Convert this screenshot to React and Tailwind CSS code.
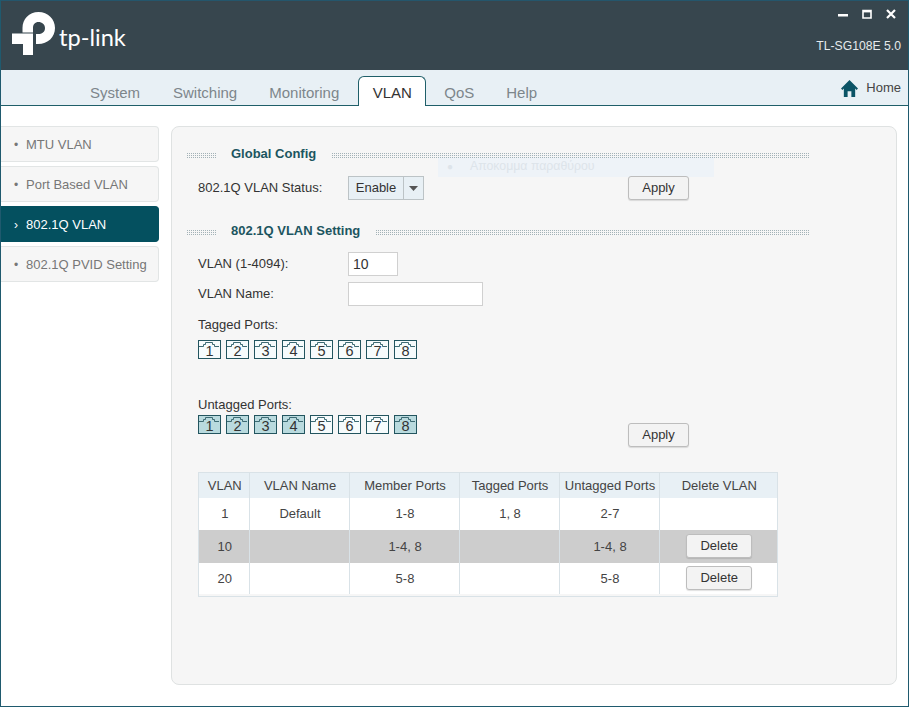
const font = { fontFamily: '"Liberation Sans", Arial, sans-serif' };

function Logo() {
  return (
    <svg width="60" height="46" viewBox="12 11 60 46" className="shrink-0">
      <path fill="#fff" d="M22.5 32.5V28C22.5 19 29 12 38.5 12C48 12 55 19 55 28C55 37 48 44 38 44H36V34H38C42 34 45 32 45 28C45 24.5 42 22 38.5 22C35 22 33 24.5 33 28V32.5Z" />
      <path fill="#fff" d="M12 33.5H33V55H23V44H12Z" />
    </svg>
  );
}

function Dots({ className }) {
  return <div className={"h-[6px] mt-[3px] bg-[linear-gradient(#f6f6f6_1px,transparent_1px),linear-gradient(90deg,#a3b2b7_1px,transparent_1px)] bg-[length:2px_2px] " + className} />;
}

function SectionTitle({ title, className }) {
  return (
    <div className={"flex items-center h-[20px] " + className}>
      <Dots className="w-[29px] ml-[15px]" />
      <span className="ml-[15px] pt-[1px] text-[13px] font-bold text-[#1c5560] whitespace-pre">{title}</span>
      <Dots className="flex-1 ml-[16px] mr-[86px]" />
    </div>
  );
}

function Btn({ children, className = "" }) {
  return (
    <button className={"h-[24px] rounded-[3px] border border-[#bdbdbd] bg-[#f3f3f3] text-[13px] text-[#333] shadow-[0_1px_1px_rgba(0,0,0,0.12)] " + className}>
      {children}
    </button>
  );
}

function Port({ n, on }) {
  return (
    <div className={"relative w-[23px] h-[19px] border-[1.5px] border-[#23555f] flex items-end justify-center " + (on ? "bg-[#b9dade]" : "bg-[#f6fbfc]")}>
      <svg width="20" height="7" viewBox="0 0 20 7" className="absolute left-0 top-0">
        <path d="M0 5.5H4.5V3.5H6.5V1.5H13.5V3.5H15.5V5.5H20" fill="none" stroke="#3d6a73" strokeWidth="1" />
      </svg>
      <span className="relative text-[14.5px] leading-[14px] text-[#333]">{n}</span>
    </div>
  );
}

function Ports({ on = [] }) {
  return (
    <div className="flex gap-[5px]">
      {[1, 2, 3, 4, 5, 6, 7, 8].map((n) => (
        <Port key={n} n={n} on={on.includes(n)} />
      ))}
    </div>
  );
}

function Side({ label, active }) {
  return (
    <div
      className={
        "h-[36px] flex items-center rounded-r-[4px] border-y border-r text-[13px] pt-[1px] " +
        (active ? "bg-[#04505f] border-[#04505f] text-white" : "bg-[#f6f6f6] border-[#e2e5e5] text-[#777]")
      }
    >
      <span className={"w-[25px] pl-[13px] text-[12px] " + (active ? "text-white" : "text-[#777]")}>{active ? "›" : "•"}</span>
      <span>{label}</span>
    </div>
  );
}

const rows = [
  ["1", "Default", "1-8", "1, 8", "2-7", false, "bg-white", "h-[32px]"],
  ["10", "", "1-4, 8", "", "1-4, 8", true, "bg-[#cdcdcd]", "h-[33px]"],
  ["20", "", "5-8", "", "5-8", true, "bg-white", "h-[31px]"],
];

export default function App() {
  return (
    <div style={font} className="w-[909px] h-[707px] flex flex-col overflow-hidden bg-white border-x border-[#1f5a6e] border-b text-[#333]">
      <header className="h-[70px] shrink-0 bg-[#37464e] border-t border-[#24566c] flex items-start justify-between">
        <div className="flex items-start pl-[11px] pt-[10px]">
          <Logo />
          <span style={{ fontFamily: "Lato, sans-serif" }} className="-ml-[13px] mt-[8px] text-[23.6px] leading-[36px] text-white whitespace-nowrap">tp-link</span>
        </div>
        <div className="flex flex-col items-end pr-[7px] pt-[7px]">
          <div className="flex items-center gap-[14px] h-[12px] pr-[5px]">
            <svg width="10" height="10" viewBox="0 0 10 10"><rect x="0" y="5" width="10" height="2.5" fill="#fff" /></svg>
            <svg width="10" height="10" viewBox="0 0 10 10"><path d="M1 1.5H9V9H1Z" fill="none" stroke="#fff" strokeWidth="1.6" /><rect x="1" y="1" width="8" height="2.4" fill="#fff" /></svg>
            <svg width="10" height="10" viewBox="0 0 10 10"><path d="M1 1L9 9M9 1L1 9" stroke="#fff" strokeWidth="2.2" /></svg>
          </div>
          <div className="mt-[18px] text-[12.2px] leading-[16px] text-[#e6eaec] whitespace-nowrap">TL-SG108E 5.0</div>
        </div>
      </header>

      <nav className="h-[36px] shrink-0 bg-[#e8f0f5] border-b border-[#1f5f69] flex items-end pl-[89px] pr-[7px] text-[15px] text-[#7d868b]">
        <span className="pb-[2px] leading-[20px]">System</span>
        <span className="ml-[33px] pb-[2px] leading-[20px]">Switching</span>
        <span className="ml-[32px] pb-[2px] leading-[20px]">Monitoring</span>
        <span className="ml-[19px] -mb-px h-[30px] w-[68px] flex items-center justify-center pt-[3px] bg-white border-x border-t border-[#1f5f69] rounded-t-[6px] text-[#333]">VLAN</span>
        <span className="ml-[18px] pb-[2px] leading-[20px]">QoS</span>
        <span className="ml-[32px] pb-[2px] leading-[20px]">Help</span>
        <div className="ml-auto self-start mt-[9px] flex items-center gap-[8px] text-[13px] leading-[18px] text-[#444]">
          <svg width="17" height="19" viewBox="0 0 18 19">
            <path d="M9 0.5L0 9.5L1.5 11L3 9.6V18.5H7V12.5H11V18.5H15V9.6L16.5 11L18 9.5Z" fill="#0b5466" />
          </svg>
          <span className="-mt-[2px]">Home</span>
        </div>
      </nav>

      <main className="flex-1 flex items-start pt-[20px]">
        <aside className="w-[158px] shrink-0 flex flex-col gap-[4px]">
          <Side label="MTU VLAN" />
          <Side label="Port Based VLAN" />
          <Side label="802.1Q VLAN" active />
          <Side label="802.1Q PVID Setting" />
        </aside>

        <section className="relative ml-[12px] w-[726px] h-[559px] bg-[#f6f6f6] border border-[#dfe2e2] rounded-[8px] pt-[16px] text-[13px]">
          <div className="absolute left-[266px] top-[28px] w-[276px] h-[22px] bg-[#eef3f8] flex items-center pl-[9px] text-[12.3px] text-[#dde4ea]">
            <span className="w-[23px] text-[10px]">●</span>
            <span>Αποκομμα παραθύρου</span>
          </div>

          <SectionTitle title="Global Config" className="relative" />

          <div className="relative flex items-center h-[24px] mt-[13px] pl-[26px]">
            <span className="w-[150px]">802.1Q VLAN Status:</span>
            <div className="w-[76px] h-[24px] flex border border-[#bcc3c6] bg-[#e8f0f5]">
              <span className="w-[55px] text-center leading-[22px] border-r border-[#bcc3c6]">Enable</span>
              <span className="flex-1 flex items-center justify-center">
                <svg width="9" height="5" viewBox="0 0 9 5"><path d="M0 0H9L4.5 5Z" fill="#555" /></svg>
              </span>
            </div>
            <Btn className="ml-[204px] w-[61px]">Apply</Btn>
          </div>

          <SectionTitle title="802.1Q VLAN Setting" className="mt-[20px]" />

          <div className="flex items-center h-[24px] mt-[12px] pl-[26px]">
            <span className="w-[150px]">VLAN (1-4094):</span>
            <input readOnly value="10" className="w-[50px] h-[24px] border border-[#d0d0d0] bg-white px-[4px] text-[14px] text-[#333] outline-none" />
          </div>
          <div className="flex items-center h-[24px] mt-[6px] pl-[26px]">
            <span className="w-[150px]">VLAN Name:</span>
            <input readOnly className="w-[135px] h-[24px] border border-[#d0d0d0] bg-white outline-none" />
          </div>

          <div className="pl-[26px] mt-[9px] pt-[1px] leading-[17px]">Tagged Ports:</div>
          <div className="pl-[26px] mt-[7px]"><Ports /></div>

          <div className="flex pl-[26px] mt-[36px]">
            <div className="w-[430px]">
              <div className="pt-[1px] leading-[17px]">Untagged Ports:</div>
              <div className="mt-[2px]"><Ports on={[1, 2, 3, 4, 8]} /></div>
            </div>
            <Btn className="mt-[28px] w-[61px]">Apply</Btn>
          </div>

          <div className="ml-[26px] mt-[25px] w-[580px] border border-[#d9e2e7] pb-[2px] bg-[#f6f6f6]">
            <table className="w-[578px] table-fixed border-collapse text-center text-[13px] text-[#444]">
              <colgroup>
                <col className="w-[50px]" />
                <col className="w-[100px]" />
                <col className="w-[110px]" />
                <col className="w-[100px]" />
                <col className="w-[100px]" />
                <col className="w-[118px]" />
              </colgroup>
              <thead>
                <tr className="h-[25px] bg-[#e8f0f5]">
                  {["VLAN", "VLAN Name", "Member Ports", "Tagged Ports", "Untagged Ports", "Delete VLAN"].map((h) => (
                    <th key={h} className="font-normal border-l border-[#d9e2e7] first:border-l-0 p-0 pl-[2px] pt-[1px] whitespace-nowrap">{h}</th>
                  ))}
                </tr>
              </thead>
              <tbody>
                {rows.map((r) => (
                  <tr key={r[0]} className={r[6] + " " + r[7]}>
                    {r.slice(0, 5).map((c, i) => (
                      <td key={i} className="border-l border-[#d9e2e7] first:border-l-0 p-0 pl-[2px] whitespace-nowrap">{c}</td>
                    ))}
                    <td className="border-l border-[#d9e2e7] p-0 pl-[2px]">
                      {r[5] && <Btn className="w-[66px] align-middle mb-[2px]">Delete</Btn>}
                    </td>
                  </tr>
                ))}
              </tbody>
            </table>
          </div>
        </section>
      </main>
    </div>
  );
}
